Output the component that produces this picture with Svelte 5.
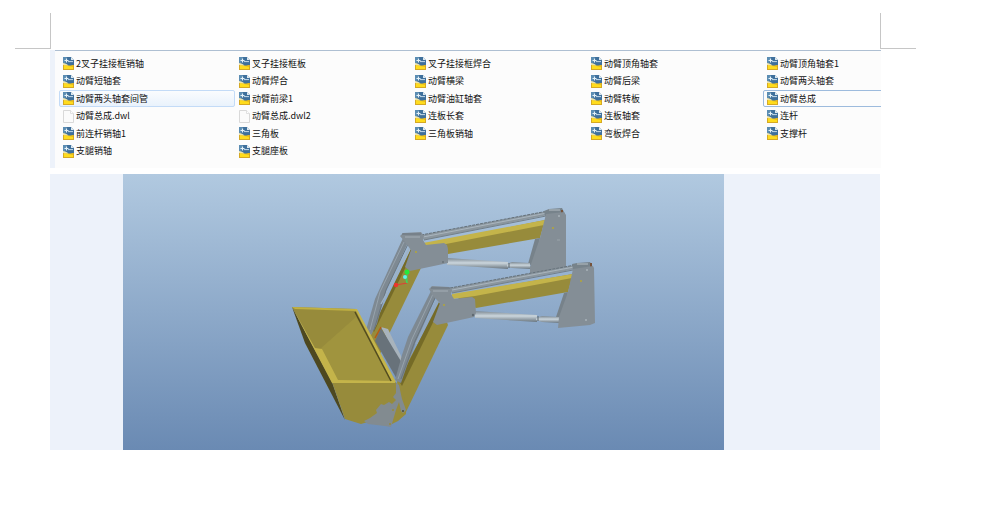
<script>
  const files = [
    '2叉子挂接框销轴', '叉子挂接框板', '叉子挂接框焊合', '动臂顶角轴套', '动臂顶角轴套1',
    '动臂短轴套', '动臂焊合', '动臂横梁', '动臂后梁', '动臂两头轴套',
    '动臂两头轴套间管', '动臂前梁1', '动臂油缸轴套', '动臂转板', '动臂总成',
    '动臂总成.dwl', '动臂总成.dwl2', '连板长套', '连板轴套', '连杆',
    '前连杆销轴1', '三角板', '三角板销轴', '弯板焊合', '支撑杆',
    '支腿销轴', '支腿座板'
  ];
  const hovered = '动臂两头轴套间管';
  const selected = '动臂总成';
</script>

<main>
  <div class="margins" aria-hidden="true">
    <span class="mark left"></span>
    <span class="mark right"></span>
  </div>

  <section class="explorer">
    <ul>
      {#each files as name}
        <li class:hovered={name === hovered} class:selected={name === selected}>
          {#if name.includes('.dwl')}
            <svg class="icon" viewBox="0 0 11 13" aria-hidden="true">
              <path d="M.5.5h7l3 3v9H.5z" fill="#fbfbfb" stroke="#d9d9d9" />
              <path d="M7.500.5v3h3" fill="#fff" stroke="#d9d9d9" stroke-width=".8" />
            </svg>
          {:else}
            <svg class="icon" viewBox="0 0 11 13" aria-hidden="true">
              <path d="M0 0h8l3 3v10H0z" fill="#3f709c" />
              <path d="M0 0h4L2 6H0z" fill="#5b8db3" />
              <path d="M0 7C3 7.200 4 8.500 6 8.500S9 8 11 8v5H0z" fill="#e9bd1c" />
              <path d="M.8 8 5 9l5 1v2H.8z" fill="#ffdc1d" />
              <path d="M.4 7v5.600h10.200V8" fill="none" stroke="#cda02a" stroke-width=".8" />
              <path d="M0 6C2 6 4 7 5.500 8.400L0 8z" fill="#ece3b0" />
              <path d="M3.500 1.500v4M1.500 3.500h4" stroke="#e4f1f8" stroke-width="1.200" />
              <path d="M5 4.600h5" stroke="#c5dbe9" />
              <path d="M8 0v3h3z" fill="#dfe9ef" />
            </svg>
          {/if}
          <span>{name}</span>
        </li>
      {/each}
    </ul>
  </section>

  <section class="viewer">
    <svg class="model" viewBox="123 174 601 276" role="img" aria-label="动臂总成">
      <defs>
        <linearGradient id="sky" x1="0" y1="0" x2="0" y2="1">
          <stop offset="0" stop-color="#b1c9e0" />
          <stop offset="1" stop-color="#6a8ab3" />
        </linearGradient>
        <linearGradient id="tube" x1="0" y1="0" x2="0" y2="1">
          <stop offset="0" stop-color="#7c8891" />
          <stop offset=".45" stop-color="#cbd6dd" />
          <stop offset="1" stop-color="#68747d" />
        </linearGradient>
      </defs>
      <rect x="123" y="174" width="601" height="276" fill="url(#sky)" />

      <!-- rear arm -->
      <path d="M411 249 421 268 390 332 380 354 370 337z" fill="#978b3b" />
      <path d="M411 249 413 252 374 332 372 329z" fill="#756b27" />
      <path d="M423 245 545 220 540 238 448 254z" fill="#978b3b" />
      <path d="M423 243 545 220 544 225 446 244 424 246z" fill="#c4b44a" />
      <path d="M421 235 548 211 548 215 424 240z" fill="#8b969e" />
      <path d="M421 235 548 211" stroke="#66727b" stroke-dasharray="3 1" />
      <path d="M423 237 547 213" stroke="#a9b5be" />
      <path d="M424 240 546 216" stroke="#737f88" />
      <path d="M535 239 540 238 534 266 528 264z" fill="#77828a" />
      <path d="M447 258 508 262 508 269 447 265z" fill="url(#tube)" />
      <path d="M507 264 512 262 530 263 530 269 512 268 507 267z" fill="url(#tube)" />
      <path d="M509 263v5" stroke="#58646d" />
      <path d="M544 211 549 209 562 208 565 214 545 216z" fill="#77838b" />
      <path d="M549 210h11" stroke="#b7c0c6" />
      <path d="M562 210v3" stroke="#76533b" stroke-width="2" />
      <path d="M546 214 564 212 566 215V271L530 273V267L540 238z" fill="#848e96" />
      <path d="M403 238 409 240 386 291 377 324 371 335 366 330 375 299z" fill="#7e8992" />
      <path d="M404 242 380 292 370 330" stroke="#97a3ad" fill="none" />
      <path d="M408 244 386 290 374 330" stroke="#69757e" fill="none" />
      <path d="M410 247 388 291 381 304" stroke="#9fb2c4" fill="none" stroke-width="1.500" />
      <path d="M400 236 403 233 421 232 424 236 423 240 426 245 444 243 447 245 448 249V263L410 271 405 267 411 250 405 242z" fill="#848e96" />
      <path d="M402 234h19" stroke="#6a757e" />
      <path d="M405 237h15" stroke="#a4aeb6" />
      <circle cx="416" cy="252" r="1" fill="#b5a636" />
      <circle cx="443" cy="262" r="1" fill="#687279" />
      <circle cx="553" cy="228" r="1" fill="#b5a636" />
      <circle cx="559" cy="216" r="1" fill="#a9b2b8" />
      <path d="M557 240h3" stroke="#9aa4aa" />

      <!-- cross box -->
      <path d="M381 327 388 329 403 360 401 365z" fill="#a8b3bc" />
      <path d="M381 328 402 363 398 381 375 341z" fill="#68727a" />
      <path d="M381 327 375 338" stroke="#b55916" stroke-width="1.500" />

      <!-- front arm -->
      <path d="M440 303 448 325 405 414 397 382z" fill="#978b3b" />
      <path d="M439 302 441 306 402 386 399 381z" fill="#756b27" />
      <path d="M452 295 573 274 568 292 476 308z" fill="#978b3b" />
      <path d="M452 294 573 274 572 278 475 296 452 299z" fill="#c4b44a" />
      <path d="M450 288 575 265 575 269 452 293z" fill="#8b969e" />
      <path d="M450 288 575 265" stroke="#66727b" stroke-dasharray="3 1" />
      <path d="M452 290 574 267" stroke="#a9b5be" />
      <path d="M452 293 573 270" stroke="#737f88" />
      <path d="M564 293 568 292 563 318 556 317z" fill="#77828a" />
      <path d="M475 311 537 315 537 322 475 318z" fill="url(#tube)" />
      <path d="M536 318 542 316 559 317 559 323 542 322 536 320z" fill="url(#tube)" />
      <path d="M538 316v5" stroke="#58646d" />
      <path d="M572 264 577 263 590 262 593 267 573 270z" fill="#77838b" />
      <path d="M577 264h11" stroke="#b7c0c6" />
      <path d="M591 263v4" stroke="#76533b" stroke-width="2" />
      <path d="M573 269 593 266 594 268 595 323 590 325 558 328 559 317 568 292z" fill="#848e96" />
      <path d="M431 291 437 294 416 342 408 363 401 383 395 380 402 355 408 337z" fill="#7e8992" />
      <path d="M433 294 412 339 398 379" stroke="#97a3ad" fill="none" />
      <path d="M436 296 415 341 401 379" stroke="#69757e" fill="none" />
      <path d="M438 300 416 344" stroke="#93a8c0" stroke-width="2" />
      <path d="M429 289 432 286 449 287 452 290 451 294 454 299 472 297 475 299 476 313 474 317 437 325 433 322 440 303 433 296z" fill="#848e96" />
      <path d="M431 288h19" stroke="#6a757e" />
      <path d="M433 291h15" stroke="#a4aeb6" />
      <circle cx="444" cy="305" r="1" fill="#b5a636" />
      <circle cx="473" cy="315" r="1.200" fill="#606a71" />
      <circle cx="581" cy="281" r="1" fill="#b5a636" />
      <circle cx="587" cy="270" r="1" fill="#a9b2b8" />
      <circle cx="586" cy="320" r="1" fill="#a9b2b8" />

      <!-- bucket -->
      <path d="M292 307 356 309 395 382H332z" fill="#978b3b" />
      <path d="M356 317 395 382H337L320 349z" fill="#a0943e" />
      <path d="M292 307 305 343 345 420 332 382z" fill="#4d4820" />
      <path d="M332 382H395L403 388 406 414 398 421 390 425 371 421 361 424 345 419z" fill="#978b3b" />
      <path d="M292 307 356 309 356 311 295 309z" fill="#c1b142" />
      <path d="M292 307 315 348 322 349 338 380 395 381 395 383 332 383z" fill="#c4b44a" />
      <path d="M355 309 357 309 396 382 392 382z" fill="#c4b44a" />
      <path d="M355 312 391 381" stroke="#514b1f" stroke-width="1.500" />
      <path d="M396 383 399 385 402 399 406 410 403 413 401 411 399 402 396 410 391 427 385 426 368 424 364 421 370 418 377 413 376 410 381 404 384 405 389 402 392 404 396 400 393 397 396 393z" fill="#828b90" />
      <circle cx="393" cy="410" r="1" fill="#978b3b" />
      <circle cx="390" cy="424" r="1" fill="#978b3b" />
      <circle cx="403" cy="411" r="1" fill="#484c3d" />

      <!-- orientation handle -->
      <path d="M396 285 407 283" stroke="#dc4037" stroke-width="1.200" />
      <path d="M407 272V283L405 277" stroke="#31df65" fill="none" />
      <circle cx="407" cy="272" r="2.500" fill="#25e83a" />
      <circle cx="405" cy="277" r="2" fill="#5cf5ef" />
      <circle cx="396" cy="285" r="2.200" fill="#ec352c" />
    </svg>
  </section>
</main>

<style>
  :global(body) {
    margin: 0;
    background: #fff;
  }
  main {
    font: 9px/16px "Noto Sans CJK SC", "Noto Sans", sans-serif;
    color: #111;
  }
  .margins {
    display: flex;
    justify-content: space-between;
    padding: 13px 75px 0 15px;
  }
  .mark {
    width: 35px;
    height: 35px;
    border-bottom: 1px solid #c6c6c6;
  }
  .mark.left {
    border-right: 1px solid #c6c6c6;
  }
  .mark.right {
    border-left: 1px solid #c6c6c6;
  }
  .explorer {
    margin: 1px 110px 6px 50px;
    padding-left: 5px;
    background: #edf2fa;
  }
  ul {
    display: grid;
    grid-template-columns: repeat(5, 176px);
    grid-template-rows: repeat(6, 1fr);
    height: 105px;
    margin: 0;
    padding: 4px 0 8px 4px;
    overflow: hidden;
    list-style: none;
    background: #fcfcfc;
    border-top: 1px solid #aebfd2;
  }
  li {
    display: flex;
    align-items: center;
    gap: 2px;
    box-sizing: border-box;
    height: 17px;
    padding-left: 3px;
    border: 1px solid transparent;
    border-radius: 2px;
    white-space: nowrap;
  }
  .hovered {
    border-color: #c3dbf7;
    background: linear-gradient(#fafcfe, #e9f2fc);
  }
  .selected {
    border-color: #9dbbdd;
  }
  .icon {
    flex: none;
    width: 11px;
    height: 13px;
  }
  .viewer {
    display: flex;
    margin: 0 111px 0 50px;
    padding: 0 156px 0 73px;
    background: #edf2fa;
  }
  .model {
    display: block;
    width: 100%;
    height: auto;
  }
</style>
